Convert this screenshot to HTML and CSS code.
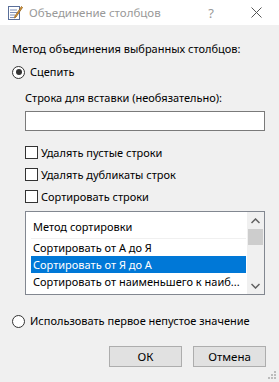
FILE: index.html
```html
<!DOCTYPE html>
<html lang="ru">

<head>
    <meta charset="UTF-8">
    <meta name="viewport" content="width=device-width, initial-scale=1.0">
    <title>Объединение столбцов</title>
    <link rel="stylesheet" href="styles.css">
</head>

<body>
    <div class="dialog">
        <div class="titlebar">
            <svg class="app-icon" width="16" height="16" viewBox="0 0 16 16">
                <rect x="1.5" y="1.5" width="11" height="13" fill="#fff" stroke="#5a6f9a"/>
                <line x1="3" y1="5" x2="10" y2="5" stroke="#7d8fb8"/>
                <line x1="3" y1="7.5" x2="10" y2="7.5" stroke="#7d8fb8"/>
                <line x1="3" y1="10" x2="8" y2="10" stroke="#7d8fb8"/>
                <line x1="3" y1="12.5" x2="7" y2="12.5" stroke="#7d8fb8"/>
                <path d="M14.5 1.5 L15.5 2.5 L9 12 L7.5 13 L8 11 Z" fill="#e8a33a" stroke="#8a5a1a" stroke-width="0.8"/>
            </svg>
            <span class="title">Объединение столбцов</span>
            <span class="help">?</span>
            <svg class="close" width="11" height="11" viewBox="0 0 11 11">
                <path d="M0.5 0.5 L10.5 10.5 M10.5 0.5 L0.5 10.5" stroke="#555" stroke-width="1"/>
            </svg>
        </div>

        <div class="content">
            <div class="heading">Метод объединения выбранных столбцов:</div>

            <label class="radio-row">
                <span class="radio checked"></span>
                <span>Сцепить</span>
            </label>

            <div class="indent">
                <div class="field-label">Строка для вставки (необязательно):</div>
                <div class="textbox"></div>

                <label class="check-row">
                    <span class="checkbox"></span>
                    <span>Удалять пустые строки</span>
                </label>
                <label class="check-row">
                    <span class="checkbox"></span>
                    <span>Удалять дубликаты строк</span>
                </label>
                <label class="check-row">
                    <span class="checkbox"></span>
                    <span>Сортировать строки</span>
                </label>

                <div class="listbox">
                    <div class="list-items">
                        <div class="list-header">Метод сортировки</div>
                        <div class="list-item">Сортировать от А до Я</div>
                        <div class="list-item selected">Сортировать от Я до А</div>
                        <div class="list-item">Сортировать от наименьшего к наиб...</div>
                        <div class="list-item">Сортировать от наибольшего к наим...</div>
                    </div>
                    <div class="scrollbar">
                        <svg class="arrow" width="9" height="6" viewBox="0 0 9 6">
                            <path d="M0.5 5 L4.5 1 L8.5 5" fill="none" stroke="#606060" stroke-width="1.5"/>
                        </svg>
                        <div class="thumb"></div>
                        <div class="track"></div>
                        <svg class="arrow" width="9" height="6" viewBox="0 0 9 6">
                            <path d="M0.5 1 L4.5 5 L8.5 1" fill="none" stroke="#606060" stroke-width="1.5"/>
                        </svg>
                    </div>
                </div>
            </div>

            <label class="radio-row bottom-radio">
                <span class="radio"></span>
                <span>Использовать первое непустое значение</span>
            </label>

            <div class="buttons">
                <button class="btn">ОК</button>
                <button class="btn">Отмена</button>
            </div>
        </div>

        <svg class="grip" width="10" height="10" viewBox="0 0 10 10">
            <rect x="7" y="1" width="2" height="2" fill="#bcbcbc"/>
            <rect x="4" y="4" width="2" height="2" fill="#bcbcbc"/>
            <rect x="7" y="4" width="2" height="2" fill="#bcbcbc"/>
            <rect x="1" y="7" width="2" height="2" fill="#bcbcbc"/>
            <rect x="4" y="7" width="2" height="2" fill="#bcbcbc"/>
            <rect x="7" y="7" width="2" height="2" fill="#bcbcbc"/>
        </svg>
    </div>
</body>

</html>
```

FILE: styles.css
```css
body {
    margin: 0;
    font-family: "Noto Sans", "Open Sans", sans-serif;
    font-size: 11px;
    color: #000;
    background: #f0f0f0;
}

.dialog {
    position: relative;
    width: 279px;
    height: 382px;
    background: #f0f0f0;
    overflow: hidden;
}

.titlebar {
    height: 25px;
    background: #fff;
    display: flex;
    align-items: center;
    padding-left: 7px;
}

.app-icon {
    margin-right: 6px;
}

.title {
    color: #999;
    font-size: 11.5px;
    flex: 1;
}

.help {
    color: #999;
    font-size: 13px;
    margin-right: 37px;
}

.close {
    margin-right: 17px;
}

.content {
    padding: 0 12px;
}

.heading {
    margin-top: 16px;
    line-height: 16px;
    white-space: nowrap;
}

.radio-row {
    display: flex;
    align-items: center;
    line-height: 16px;
    margin-top: 7px;
    white-space: nowrap;
}

.radio {
    width: 11px;
    height: 11px;
    border: 1px solid #333;
    border-radius: 50%;
    background: #fff;
    margin-right: 5px;
    position: relative;
    flex-shrink: 0;
}

.radio.checked::after {
    content: "";
    position: absolute;
    left: 2.5px;
    top: 2.5px;
    width: 6px;
    height: 6px;
    border-radius: 50%;
    background: #333;
}

.indent {
    padding-left: 13px;
}

.field-label {
    margin-top: 10px;
    line-height: 16px;
}

.textbox {
    margin-top: 5px;
    height: 18px;
    width: 238px;
    background: #fff;
    border: 1px solid #7a7a7a;
}

.check-row {
    display: flex;
    align-items: center;
    height: 22px;
}

.check-row:first-of-type {
    margin-top: 10px;
}

.checkbox {
    width: 11px;
    height: 11px;
    border: 1px solid #333;
    background: #fff;
    margin-right: 3px;
}

.listbox {
    margin-top: 4px;
    width: 238px;
    height: 82px;
    border: 1px solid #828790;
    background: #fff;
    display: flex;
    overflow: hidden;
}

.list-items {
    flex: 1;
    min-width: 0;
    padding: 4px 1px 0 5px;
    overflow: hidden;
}

.list-header {
    height: 22px;
    line-height: 22px;
    padding-left: 2px;
    border-bottom: 1px solid #f0f0f0;
}

.list-item {
    height: 17px;
    line-height: 17px;
    padding-left: 2px;
    white-space: nowrap;
    overflow: hidden;
}

.list-item.selected {
    background: #0078d7;
    color: #fff;
}

.scrollbar {
    width: 17px;
    background: #f0f0f0;
    display: flex;
    flex-direction: column;
    align-items: center;
}

.arrow {
    margin: 6px 0 5px;
}

.thumb {
    width: 15px;
    height: 16px;
    background: #cdcdcd;
}

.track {
    flex: 1;
}

.bottom-radio {
    margin-top: 18px;
}

.buttons {
    display: flex;
    justify-content: flex-end;
    gap: 11px;
    margin-top: 17px;
    padding-right: 1px;
}

.btn {
    width: 73px;
    height: 21px;
    background: #e1e1e1;
    border: 1px solid #adadad;
    font-family: inherit;
    font-size: 11.5px;
    color: #000;
    padding: 0;
}

.grip {
    position: absolute;
    right: 2px;
    bottom: 2px;
}
```
